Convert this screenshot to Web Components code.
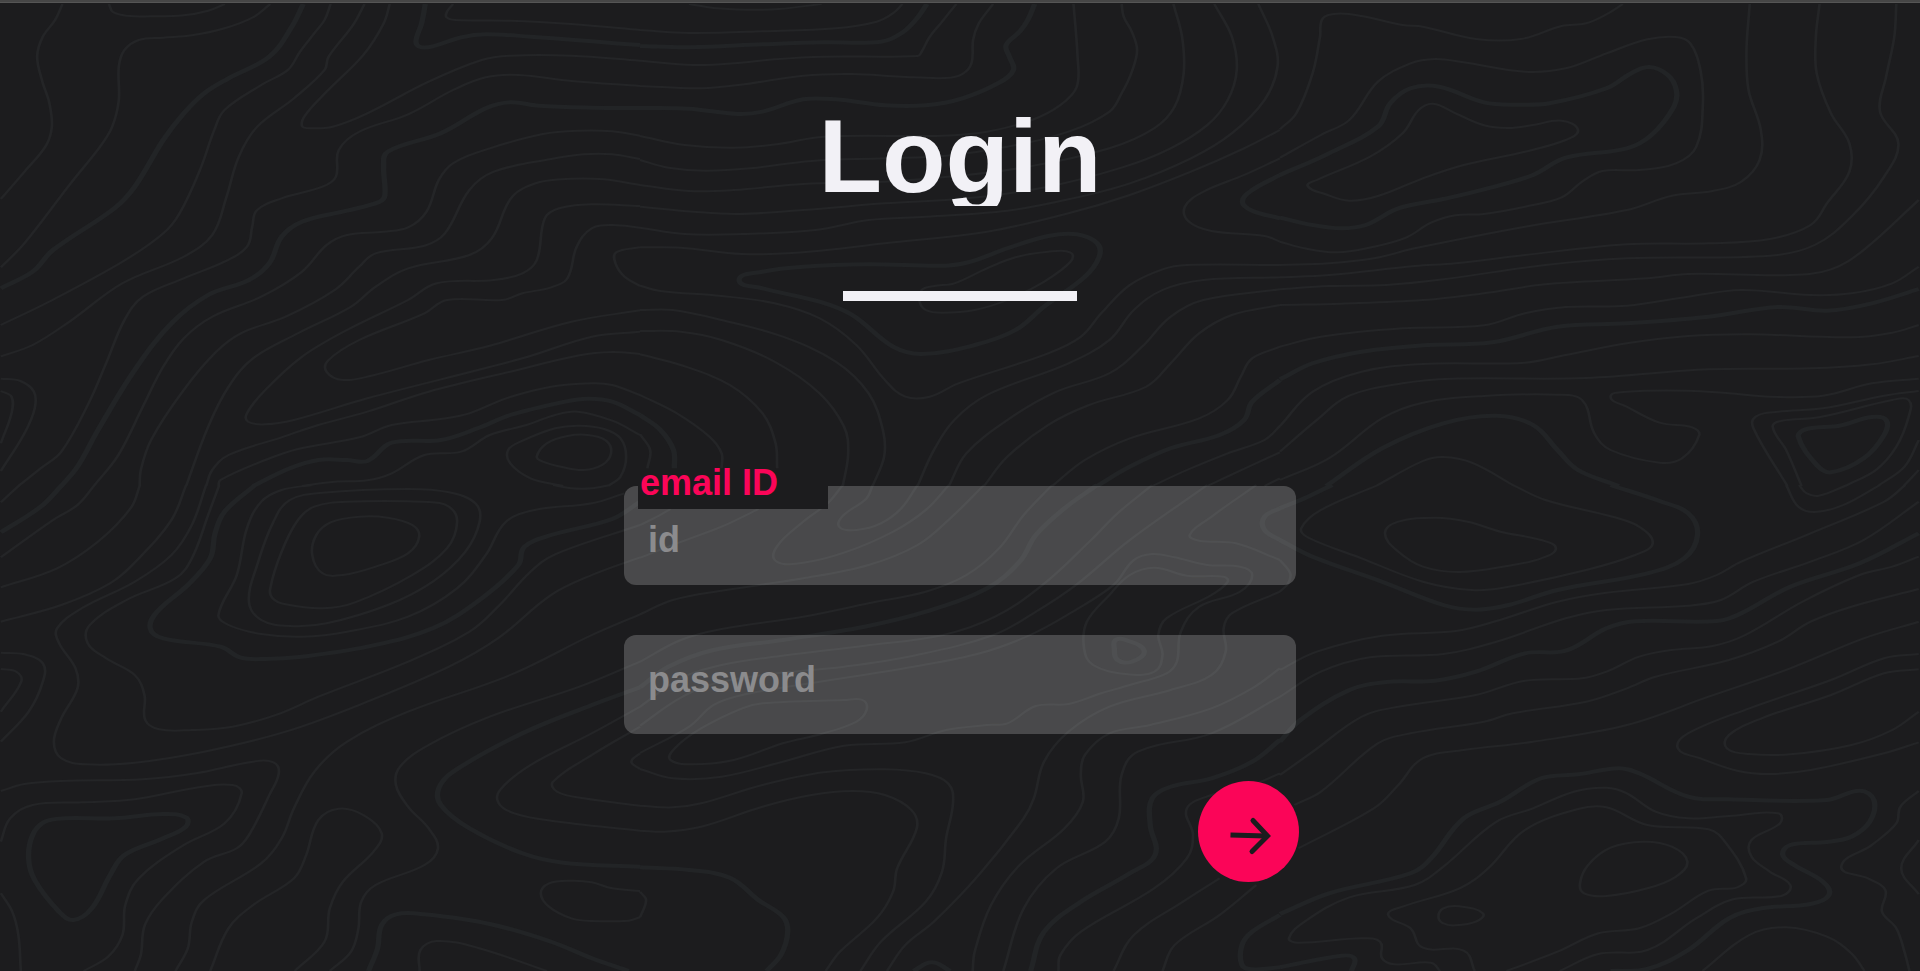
<!DOCTYPE html>
<html lang="en">
<head>
<meta charset="utf-8">
<meta name="viewport" content="width=device-width, initial-scale=1">
<title>Login</title>
<style>
html, body { margin: 0; height: 100%; background: #1c1c1e; }
body { font-family: "Liberation Sans", Arial, sans-serif; }
</style>
</head>
<body>
<login-page>
  <page-title>Login</page-title>
  <login-form>
    <text-field name="email" type="text" placeholder="id" label="email ID"></text-field>
    <text-field name="password" type="password" placeholder="password"></text-field>
    <submit-button label="Log in"></submit-button>
  </login-form>
</login-page>

<script>
/* Contour lines, drawn on six sheets (3 x 2). Each sheet has a 1568 x 1458 grid
   that covers 640 x 486 units of the map. "b" marks an index (heavy) contour,
   a trailing "z" closes the ring. */
const SHEETS = [
{ x: 0, y: 0, lines: `
153,12 135,60 105,110 91,170 104,245 121,310 127,380 112,438 60,515 2,597
267,12 277,36 310,47 380,49 450,46 510,32 551,12
662,12 620,52 550,85 470,106 400,113 340,120 305,150 291,200 291,300 275,380 245,440 170,555 60,730 2,802
810,12 795,60 770,100 735,155 705,210 640,255 550,330 525,390 490,510 440,640 400,700 300,785 120,905 2,975
893,12 865,75 805,170 795,210 720,295 630,380 585,470 555,590 520,705 450,770 300,850 170,965 80,1035 2,1069
955,12 940,70 890,165 800,275 748,345 740,378 760,385 815,380 900,340 1050,245 1180,180 1250,167 1400,167 1568,182
1568,258 1400,243 1270,225 1190,232 1110,270 1000,343 880,395 830,450 823,530 790,560 690,595 630,630 618,680 605,740 550,785 450,835 350,890 305,960 260,1090 215,1215 150,1355 100,1405 45,1458
b 743,12 715,80 660,170 560,235 500,280 450,340 400,420 330,560 280,625 130,750 80,815 2,865
b 1042,12 1033,70 1019,125 1030,141 1060,139 1130,112 1190,103 1300,110 1568,135
b 1568,324 1450,323 1320,317 1250,307 1190,325 1080,400 950,455 940,500 943,585 930,605 850,632 740,665 690,710 660,790 610,840 510,885 420,970 330,1110 240,1290 190,1400 150,1458
1568,407 1500,394 1420,392 1330,402 1200,445 1110,490 1075,540 1045,635 1000,682 940,695 850,705 800,735 740,815 640,890 520,950 450,1015 400,1100 350,1220 290,1365 230,1458
1568,477 1500,463 1430,463 1350,477 1210,515 1150,570 1090,700 1040,737 920,760 880,800 820,870 700,950 590,1000 530,1055 450,1170 370,1320 345,1410 342,1458
1568,555 1480,538 1400,536 1320,547 1255,590 1205,715 1150,765 1000,805 920,860 860,920 730,1000 620,1075 560,1160 510,1280 456,1458
1568,618 1450,613 1370,625 1335,655 1315,780 1280,820 1210,840 1070,850 1000,900 850,990 740,1070 650,1170 605,1240 608,1265 650,1273 720,1260 900,1195 1280,1075 1450,1010 1568,995
1568,683 1500,675 1450,685 1413,740 1390,835 1350,862 1280,880 1230,900 1095,900 1040,940 880,1020 805,1080 800,1115 840,1140 910,1127 1050,1080 1200,1037 1400,965 1568,931
1568,742 1510,757 1508,790 1530,830 1568,858
1568,1062 1500,1056 1420,1066 1250,1115 1050,1175 900,1235 780,1275 690,1312 560,1365 520,1410 505,1458
1568,1185 1500,1155 1450,1150 1350,1160 1240,1195 1150,1240 1080,1257 960,1275 880,1312 730,1347 650,1380 540,1440 535,1458
b 1568,1245 1500,1205 1440,1196 1380,1206 1250,1245 1170,1285 1080,1320 960,1328 900,1383 850,1380 780,1380 710,1405 620,1458
1568,1305 1500,1262 1415,1235 1360,1245 1290,1275 1200,1305 1130,1355 1040,1365 960,1420 900,1441 820,1445 740,1458
1315,1370 1340,1330 1390,1308 1440,1305 1485,1322 1497,1360 1475,1395 1430,1410 1380,1402 1330,1385 z
1380,1458 1300,1435 1250,1390 1245,1350 1275,1325 1360,1285 1420,1277 1480,1287 1520,1315 1534,1370 1520,1430 1490,1458
1110,12 1095,35 1094,52 1115,60 1250,62 1400,72 1568,90
2,1136 50,1143 83,1175 85,1225 60,1300 2,1413
2,1173 28,1190 28,1240 2,1330` },
{ x: 640, y: 0, lines: `
120,12 180,24 260,29 340,27 445,12
0,90 120,99 300,94 480,85 580,65 620,40 643,12
b 0,138 120,142 300,133 450,127 590,125 640,100 675,60 703,12
0,182 130,195 230,190 330,178 450,170 680,168 690,155 710,110 740,65 775,12
0,258 150,265 260,252 400,227 520,222 640,230 750,234 790,222 812,190 816,120 830,70 865,12
b 0,324 120,326 240,342 300,335 400,298 480,298 600,316 700,316 790,295 880,248 915,210 905,170 897,135 930,95 950,60 967,12
0,408 110,435 230,443 340,432 450,410 740,407 850,395 960,360 1030,315 1070,260 1072,170 1062,12
0,480 70,503 160,512 270,505 420,483 600,475 750,467 900,440 1050,395 1150,335 1180,280 1205,215 1218,150 1205,95 1185,50 1180,12
0,555 120,573 230,570 400,552 600,545 800,525 950,500 1150,445 1260,385 1310,320 1332,220 1328,110 1307,12
0,620 130,635 240,642 400,630 600,610 800,595 1000,560 1180,503 1300,445 1390,375 1440,300 1462,210 1450,110 1407,12
0,683 110,702 250,702 430,690 560,660 700,650 900,632 1050,598 1200,550 1350,475 1450,400 1530,300 1562,200 1550,110 1515,12
0,742 100,743 250,762 400,757 600,730 850,695 1050,640 1200,585 1350,515 1480,445 1568,390
1568,475 1480,525 1380,575 1335,620 1345,665 1400,693 1530,708 1568,725
b 1568,525 1500,570 1476,605 1500,632 1568,655
b 243,840 300,815 400,800 560,793 750,797 810,785 900,745 1000,708 1070,703 1120,730 1125,770 1090,830 990,920 920,990 820,1035 690,1062 620,1040 520,945 440,905 300,865 z
685,905 690,870 720,858 770,850 850,805 920,772 1000,755 1055,758 1055,785 990,845 900,900 820,930 740,938 700,930 z
0,857 50,873 200,888 330,910 440,955 530,1035 600,1140 650,1190 710,1190 780,1150 1000,1060 1080,1010 1130,940 1200,855 1280,808 1340,795 1568,795
0,930 80,930 200,960 350,1010 480,1085 560,1180 595,1290 598,1370 570,1458
0,993 100,995 200,1020 330,1085 440,1180 500,1280 510,1360 497,1458
0,1063 100,1095 220,1155 300,1240 332,1330 336,1405
0,1185 90,1240 170,1310 200,1360 200,1405
b 0,1245 50,1290 82,1350 84,1405
0,1303 25,1350 18,1405
680,1458 720,1350 770,1260 850,1185 1050,1090 1150,1020 1210,930 1280,870 1380,840 1568,832
757,1458 800,1360 900,1260 1020,1175 1150,1120 1230,1040 1300,950 1380,900 1568,868
843,1458 900,1370 1000,1275 1100,1215 1240,1160 1300,1090 1370,1000 1450,945 1568,915
1568,1040 1500,1075 1472,1130 1440,1200 1370,1255 1200,1315 1090,1380 1010,1458
b 1568,1140 1500,1205 1480,1260 1420,1305 1300,1345 1200,1400 1120,1458
1568,1278 1530,1320 1440,1360 1340,1410 1255,1458
1568,1357 1500,1395 1390,1458
1568,1435 1530,1458` },
{ x: 1280, y: 0, lines: `
0,388 40,340 80,220 98,110 105,55 140,41 200,48 300,75 350,80 480,117 590,117 690,78 750,70 800,43 840,12
0,473 100,405 170,360 240,245 320,190 380,177 450,187 600,215 700,205 800,160 900,118 970,111 1005,130 1030,210 1036,310 1020,440 970,490 880,510 790,513 740,545 690,592 600,620 500,642 430,646 370,668 310,712 230,740 140,757 60,745 0,725
b 0,525 120,460 240,380 270,310 320,265 390,260 500,307 580,314 660,310 800,265 860,220 905,201 950,225 971,270 965,320 910,405 850,445 700,473 620,525 500,568 400,597 290,625 210,675 150,685 80,675 0,653
68,558 90,540 220,470 300,400 340,330 375,311 430,340 500,376 560,384 620,375 690,362 730,390 700,420 600,455 450,495 350,535 240,588 170,602 110,582 z
0,795 120,790 230,775 330,745 600,680 850,630 960,587 1060,573 1130,545 1175,480 1178,390 1148,270 1143,150 1151,12
0,832 120,825 330,798 430,790 600,765 850,733 1050,730 1200,717 1300,675 1340,610 1395,515 1395,430 1350,340 1315,220 1313,110 1322,12
0,868 120,858 260,855 400,838 650,795 850,775 1200,767 1310,735 1400,650 1480,530 1515,430 1470,335 1485,230 1505,110 1510,12
0,915 150,911 350,900 500,880 650,853 900,835 1000,822 1250,825 1350,808 1430,750 1565,600
0,1040 100,1010 300,985 500,976 600,940 700,921 850,917 1000,890 1130,870 1300,885 1400,880 1500,850 1565,800
b 0,1138 80,1090 200,1055 350,1036 520,1027 680,980 850,970 1050,950 1220,921 1340,932 1450,910 1565,867
0,1278 80,1175 200,1115 350,1092 600,1088 700,1065 850,1030 1000,1008 1150,1003 1400,1012 1500,998 1565,975
0,1355 90,1260 170,1187 300,1150 420,1136 750,1134 1050,1108 1300,1105 1450,1093 1565,1068
0,1440 120,1375 250,1255 350,1208 500,1188 680,1184 740,1200 770,1300 810,1350 930,1388 985,1375 1027,1305 1010,1282 930,1268 850,1220 810,1190 850,1175 1000,1172 1100,1180 1200,1190 1330,1187 1450,1150 1565,1136
b 113,1458 250,1345 400,1270 530,1247 620,1275 680,1350 730,1410 830,1458
235,1458 350,1383 400,1371 470,1388 575,1458
1565,1173 1480,1187 1330,1225 1220,1235 1165,1250 1160,1285 1243,1458
1278,1458 1240,1350 1207,1280 1230,1262 1320,1252 1500,1200 1540,1200 1540,1250 1510,1340 1460,1410 1385,1458
b 1270,1310 1290,1287 1370,1277 1450,1251 1485,1260 1480,1305 1430,1375 1350,1417 1315,1395 z
1565,1320 1530,1400 1465,1458
1565,1410 1528,1458` },
{ x: 0, y: 485, lines: `
48,0 2,52
b 152,0 100,65 2,142
232,0 190,60 130,105 2,217
343,0 320,70 240,170 140,250 2,307
456,0 420,105 340,220 270,295 150,360 2,410
505,0 470,120 420,210 330,290 200,370 140,430 145,475 185,550 190,610 150,700 132,770 150,820 210,838 330,833 500,800 700,740 900,650 1100,545 1220,460 1350,330 1450,270 1568,217
537,0 510,90 470,220 430,280 310,345 220,420 215,475 260,520 330,570 354,630 356,705 390,733 470,735 570,725 680,688 780,635 1000,530 1150,440 1220,365 1300,260 1360,208 1568,120
b 625,0 550,80 527,145 515,220 460,300 385,380 368,430 400,460 540,485 590,518 650,522 740,515 900,485 1060,430 1180,340 1270,240 1285,185 1350,150 1500,102 1568,50
765,0 690,15 640,50 605,130 580,270 535,390 560,420 640,447 740,455 850,440 1000,395 1120,310 1190,210 1240,110 1310,75 1450,55 1530,25
610,350 630,240 670,110 710,45 790,23 1000,12 1100,22 1165,55 1175,110 1140,200 1060,290 950,360 800,415 710,423 640,405 z
662,310 690,200 730,105 770,65 850,50 1050,51 1100,65 1120,110 1095,190 1010,270 870,352 790,370 700,358 668,340 z
765,210 775,150 810,112 880,95 950,98 1010,120 1027,155 1000,205 920,245 840,270 790,265 z
1355,0 1400,10 1450,10 1495,0
1568,388 1450,450 1250,570 1000,680 850,770 770,860 720,970 690,1060 640,1135 500,1245 470,1310 460,1390 430,1458
1568,530 1420,605 1200,695 1050,780 980,845 970,900 1000,965 1050,1030 1073,1090 1040,1140 920,1200 885,1250 878,1330 860,1400 808,1458
b 1568,607 1450,660 1280,745 1110,860 1075,910 1080,960 1150,1030 1280,1105 1380,1133 1568,1145
1568,665 1450,745 1300,840 1225,915 1222,955 1260,985 1350,1007 1568,1037
1568,725 1450,810 1355,890 1365,920 1430,940 1568,962
1568,805 1547,830 1568,852
2,503 60,508 105,535 105,590 70,680 2,770
2,552 40,560 52,590 2,680
2,918 60,897 150,888 350,883 480,865 620,830 670,832 683,865 660,930 610,1050 580,1090 500,1130 400,1240 355,1320 345,1410 330,1458
2,1070 25,1000 80,960 200,952 330,943 480,908 570,900 592,925 550,1015 450,1080 340,1180 307,1260 300,1350 265,1415 205,1458
b 70,1120 80,1050 110,1010 160,1000 280,1000 400,987 455,997 455,1025 400,1060 305,1110 270,1170 225,1270 180,1305 145,1280 85,1185 z
2,1225 30,1280 45,1350 51,1458
515,1458 560,1330 620,1260 720,1180 750,1110 780,1005 830,971 890,990 935,1045 915,1100 840,1190 808,1270 795,1370 722,1458
b 903,1458 925,1390 935,1320 970,1288 1040,1288 1200,1317 1350,1370 1450,1420 1540,1458
1028,1458 1030,1395 1070,1368 1170,1388 1340,1458
1568,1218 1500,1210 1450,1192 1400,1187 1345,1195 1325,1225 1345,1265 1400,1300 1450,1308 1540,1307 1568,1297` },
{ x: 640, y: 485, lines: `
0,120 45,93 75,72
0,218 90,175 200,125 290,72
497,0 462,52 400,110 335,185 335,230 400,233 500,203 620,140 700,75 757,0
570,0 555,40 495,95 490,128 530,135 590,115 640,70 680,0
0,388 80,345 200,317 400,280 560,240 680,180 760,100 843,0
0,530 100,465 200,432 400,395 560,355 700,320 800,270 880,190 940,90 1010,0
b 0,607 70,545 180,495 350,465 550,425 700,380 850,310 930,230 970,150 1040,70 1120,0
0,665 100,580 200,540 343,513 550,482 743,450 870,395 986,300 1105,165 1170,85 1255,0
0,722 90,645 170,600 300,570 500,545 670,512 866,450 970,380 1068,300 1200,165 1390,0
0,804 120,725 180,660 250,630 400,598 670,545 833,505 956,450 1060,380 1160,300 1210,225 1255,207 1310,217 1390,240 1470,245 1500,270 1470,320 1370,365 1325,440 1315,530 1290,565 1200,600 1130,625 1050,657 970,663 900,715 850,720 750,735 650,772 500,782 350,830 200,875 80,880 0,852
300,655 500,645 545,645 555,675 530,710 450,745 350,775 230,825 130,838 75,825 85,790 150,730 250,670 z
1200,270 1260,248 1340,272 1430,275 1440,290 1400,330 1290,400 1270,450 1280,510 1260,560 1190,567 1110,540 1088,490 1095,410 1150,330 z
b 1162,490 1165,465 1190,465 1235,497 1205,530 1170,525 z
1568,320 1450,385 1430,430 1435,500 1400,570 1300,615 1150,665 1050,740 990,830 965,940 940,1000 830,1170 720,1310 650,1380 605,1458
1568,550 1500,610 1400,670 1250,720 1150,745 1090,810 1080,870 1085,950 1040,1030 930,1140 860,1260 820,1400 815,1458
1568,635 1400,745 1220,800 1180,870 1173,1000 1140,1070 1020,1150 940,1270 890,1458
b 1568,765 1500,830 1400,880 1300,905 1255,940 1250,1020 1262,1110 1200,1165 1080,1250 990,1340 957,1458
1568,865 1500,900 1400,930 1340,970 1355,1050 1340,1120 1260,1210 1080,1340 1030,1410 1025,1458
1420,1180 1330,1250 1210,1350 1160,1458
1510,1200 1420,1290 1310,1380 1280,1458
b 1568,1290 1500,1340 1475,1380 1475,1440 1500,1453 1568,1447
0,962 80,967 150,955 300,900 450,862 600,853 700,865 755,895 767,950 750,1060 740,1160 700,1250 590,1370 540,1458
0,1037 60,1040 150,1025 300,965 420,930 520,918 600,930 665,975 678,1030 630,1150 620,1220 580,1300 490,1400 455,1458
b 0,1147 120,1155 220,1178 290,1245 350,1295 362,1340 345,1410 310,1458
0,1220 15,1245 0,1297
b 670,1458 715,1432 760,1458
1510,0 1400,95 1347,150 1370,167 1460,175 1568,225
b 1568,70 1530,95 1530,135 1568,165` },
{ x: 1280, y: 485, lines: `
b 0,70 60,40 128,0
b 0,165 80,215 250,290 400,360 480,374 560,360 680,315 900,265 990,220 1023,150 1000,85 930,48 810,0
240,0 100,75 52,130 70,158 200,220 350,290 470,315 560,305 750,255 870,210 913,175 880,125 820,97 650,45 570,0
257,145 290,110 380,98 460,110 540,140 640,165 676,190 640,220 560,242 440,261 350,245 290,200 z
0,225 25,265 20,295 0,320
0,555 90,500 250,452 430,438 530,408 680,350 800,323 1000,297 1070,270 1130,230 1300,145 1480,50 1532,0
1240,0 1270,65 1310,81 1380,60 1470,0
1272,0 1290,25 1320,32 1390,0
0,635 100,560 220,517 400,507 530,470 700,400 800,375 1000,362 1080,345 1160,290 1300,230 1430,165 1565,50
b 0,770 50,705 170,615 260,591 380,587 480,560 600,505 700,497 800,430 870,409 1070,408 1130,385 1250,305 1420,235 1565,145
0,870 80,800 200,695 290,665 480,630 600,587 740,580 800,560 880,515 960,495 1060,483 1140,450 1280,350 1420,270 1500,245 1565,215
35,960 100,920 240,775 320,745 500,710 570,685 750,650 850,610 920,575 1100,525 1220,470 1300,410 1400,365 1565,312
45,1090 230,970 290,900 350,820 450,795 620,770 850,720 1050,635 1250,550 1430,460 1565,410
1565,507 1480,520 1350,585 1150,670 1000,745 975,790 1030,820 1120,857 1200,867 1300,855 1480,805 1565,772
1565,553 1480,565 1350,630 1180,700 1100,750 1095,790 1150,807 1250,808 1400,780 1500,735 1565,680
b 0,1287 120,1225 320,1165 370,1120 450,1000 540,950 640,880 730,868 830,850 880,865 1000,935 1100,943 1340,945 1420,917 1455,945 1445,1010 1400,1055 1340,1071 1250,1080 1232,1110 1260,1140 1330,1190 1345,1230 1300,1257 1180,1270 1100,1300 1000,1395 900,1452 810,1458
392,1458 370,1433 280,1438 250,1420 245,1370 200,1360 45,1373 22,1360 60,1310 170,1237 330,1200 400,1145 530,1010 620,970 720,920 800,908 850,925 920,980 1000,1000 1100,993 1220,985 1225,1015 1155,1065 1155,1115 1200,1160 1250,1200 1230,1232 1110,1243 1020,1300 900,1395 780,1407 685,1458
477,1458 450,1397 350,1388 320,1330 265,1290 300,1265 440,1210 510,1150 600,1035 730,972 800,967 900,1020 1050,1033 1090,1070 1142,1180 1120,1207 1050,1217 960,1285 880,1330 780,1345 680,1400 555,1458
735,1195 755,1140 810,1088 890,1070 960,1085 998,1130 970,1175 900,1210 800,1233 745,1225 z
388,1295 400,1270 440,1264 497,1285 480,1310 430,1321 400,1315 z
b 0,1447 150,1412 182,1420 175,1458
1035,1458 1150,1350 1240,1327 1340,1355 1400,1405 1432,1458
1565,918 1520,965 1510,1015 1450,1080 1375,1145 1440,1180 1483,1215 1475,1280 1510,1330 1530,1400 1542,1458
1565,1065 1522,1150 1565,1228` }
];

/* The map is drawn narrow and then widened, so that the strokes of steep
   contours come out heavier than those of flat ones. */
const WIDEN = 1.35;

/* Smooth curve through the points; tangents are limited by the length of each
   segment so that uneven spacing does not make loops. */
function smoothPath(points, closed) {
  const n = points.length;
  const at = i => closed ? points[(i + n) % n] : points[Math.max(0, Math.min(n - 1, i))];
  const dist = (a, b) => Math.hypot(a[0] - b[0], a[1] - b[1]);
  const tangent = i => {
    const a = at(i - 1), b = at(i + 1), d = dist(a, b) || 1;
    return [(b[0] - a[0]) / d, (b[1] - a[1]) / d];
  };
  const f = v => v.toFixed(1);
  let d = `M${f(points[0][0])} ${f(points[0][1])}`;
  for (let i = 0; i < (closed ? n : n - 1); i++) {
    const p = at(i), q = at(i + 1), k = dist(p, q) * 0.36;
    const s = tangent(i), t = tangent(i + 1);
    d += `C${f(p[0] + s[0] * k)} ${f(p[1] + s[1] * k)} ${f(q[0] - t[0] * k)} ${f(q[1] - t[1] * k)} ${f(q[0])} ${f(q[1])}`;
  }
  return d + (closed ? "Z" : "");
}

function contourPaths() {
  let thin = "", bold = "";
  for (const sheet of SHEETS) {
    for (const line of sheet.lines.trim().split("\n")) {
      const points = line.match(/\d+,\d+/g).map(pair => {
        const [x, y] = pair.split(",").map(Number);
        return [(sheet.x + x * 640 / 1568) / WIDEN, sheet.y + y * 486 / 1458];
      });
      const d = smoothPath(points, line.trim().endsWith("z"));
      if (line.startsWith("b")) bold += d; else thin += d;
    }
  }
  return { thin, bold };
}

customElements.define("contour-map", class extends HTMLElement {
  constructor() {
    super();
    const { thin, bold } = contourPaths();
    this.attachShadow({ mode: "open" }).innerHTML = `
      <style>
        :host { display: block; overflow: hidden; }
        svg { display: block; width: 100%; height: 100%; fill: none; }
        .thin { stroke: #242527; stroke-width: 2; }
        .bold { stroke: #222426; stroke-width: 4; }
      </style>
      <svg viewBox="0 0 1920 971" preserveAspectRatio="xMidYMin slice" aria-hidden="true">
        <g transform="scale(${WIDEN} 1)">
          <path class="thin" d="${thin}"/><path class="bold" d="${bold}"/>
        </g>
      </svg>`;
  }
});

customElements.define("page-title", class extends HTMLElement {
  constructor() {
    super();
    this.attachShadow({ mode: "open" }).innerHTML = `
      <style>
        :host { display: flex; flex-direction: column; align-items: center; gap: 85px; }
        h1 { margin: 0; height: 106px; line-height: 112px; font-size: 104px; font-weight: 700;
             color: #f2f1f6; overflow: hidden; }
        hr { margin: 0; border: 0; width: 234px; height: 10px; background: #f2f1f6; }
      </style>
      <h1><slot></slot></h1><hr>`;
  }
});

customElements.define("text-field", class extends HTMLElement {
  connectedCallback() {
    const root = this.shadowRoot || this.attachShadow({ mode: "open" });
    const label = this.getAttribute("label");
    const hint = this.getAttribute("placeholder");
    root.innerHTML = `
      <style>
        :host { display: block; position: relative; }
        input { display: block; box-sizing: border-box; width: 100%; height: 99px; margin: 0;
                border: 0; border-radius: 12px; padding: 0 24px 10px; outline: 0;
                background: rgba(255, 255, 255, .2); color: #f2f1f6; font: 700 36px/42px "Liberation Sans", Arial, sans-serif; }
        :host([label]) input { padding: 8px 24px 0; }
        input::placeholder { color: #8b8b8d; opacity: 1; }
        label { position: absolute; left: 14px; top: -16px; box-sizing: border-box; width: 190px; height: 39px;
                padding-left: 2px; background: #1c1c1e; color: #fb0558;
                font-size: 36px; font-weight: 700; line-height: 26px; white-space: nowrap; }
      </style>
      <input id="field" type="${this.getAttribute("type")}" name="${this.getAttribute("name")}"
             placeholder="${hint}" ${label ? "" : `aria-label="${hint}"`}>
      ${label ? `<label for="field">${label}</label>` : ""}`;
  }
});

customElements.define("submit-button", class extends HTMLElement {
  connectedCallback() {
    const root = this.shadowRoot || this.attachShadow({ mode: "open" });
    root.innerHTML = `
      <style>
        :host { display: block; }
        button { display: block; width: 101px; height: 101px; padding: 0; border: 0;
                 border-radius: 50%; background: #fb0558; cursor: pointer; }
        svg { display: block; width: 100%; height: 100%; fill: none; stroke: #1c1c1e; stroke-width: 5; }
      </style>
      <button type="submit" aria-label="${this.getAttribute("label")}">
        <svg viewBox="0 0 101 101" aria-hidden="true">
          <path d="M32.500 54L68 55"/>
          <path d="M55 39.500L69.500 55L54 70.500" stroke-linecap="round"/>
        </svg>
      </button>`;
  }
});

customElements.define("login-form", class extends HTMLElement {
  constructor() {
    super();
    this.attachShadow({ mode: "open" }).innerHTML = `
      <style>
        :host { display: block; width: 35%; min-width: 300px; }
        form { display: flex; flex-direction: column; gap: 50px; }
        ::slotted(submit-button) { align-self: flex-end; margin: -3px -3px 0 0; }
      </style>
      <form onsubmit="return false"><slot></slot></form>`;
  }
});

customElements.define("login-page", class extends HTMLElement {
  constructor() {
    super();
    this.attachShadow({ mode: "open" }).innerHTML = `
      <style>
        :host { display: block; position: relative; box-sizing: border-box; min-height: 100%;
                border-top: 2px solid #464646; box-shadow: inset 0 1px #555; overflow: hidden; }
        contour-map { position: absolute; inset: -2px 0 0; clip-path: inset(4px 0 0); }
        main { position: relative; display: flex; flex-direction: column; align-items: center;
               gap: 185px; padding: 98px 0 48px; }
      </style>
      <contour-map></contour-map>
      <main><slot></slot></main>`;
  }
});
</script>
</body>
</html>
